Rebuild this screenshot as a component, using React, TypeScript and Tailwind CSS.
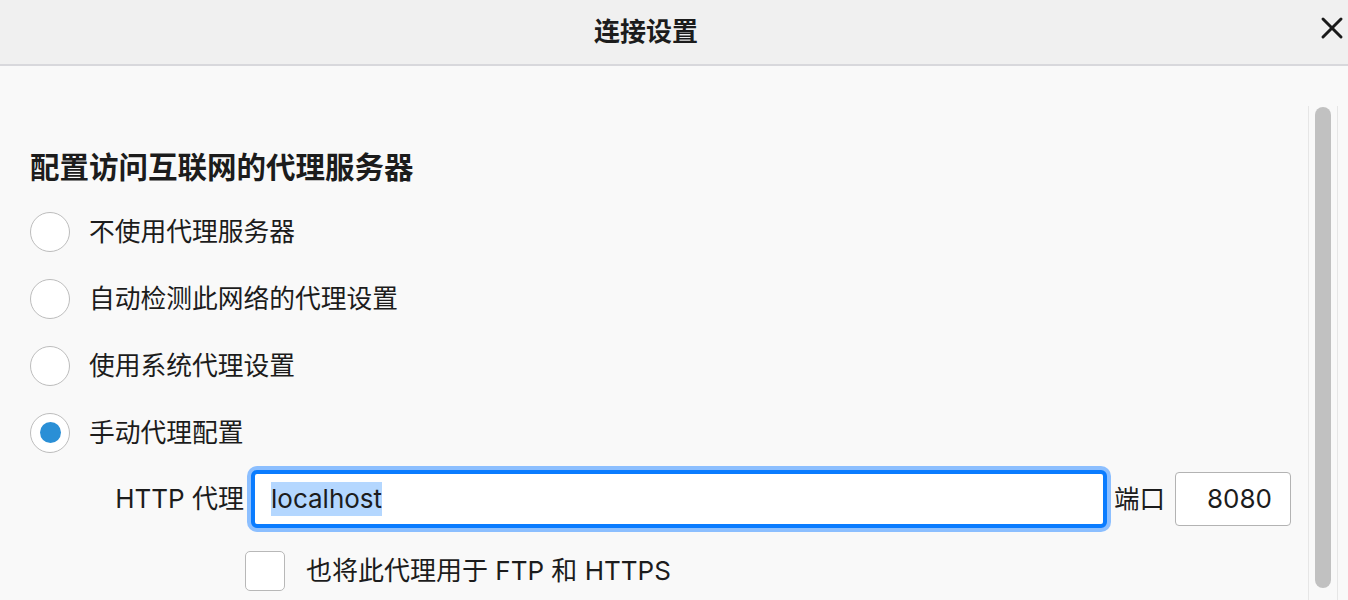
import { X } from "lucide-react";

const FONT = { fontFamily: 'Inter, "Noto Sans CJK SC", sans-serif' };

const OPTIONS = [
  { label: "不使用代理服务器", checked: false },
  { label: "自动检测此网络的代理设置", checked: false },
  { label: "使用系统代理设置", checked: false },
  { label: "手动代理配置", checked: true },
];

function Radio({ checked }: { checked: boolean }) {
  return (
    <span className="flex h-[40px] w-[40px] shrink-0 items-center justify-center rounded-full border-[1.5px] border-[#bdbdbd] bg-white">
      {checked && <span className="h-[21px] w-[21px] rounded-full bg-[#2a8fd6]" />}
    </span>
  );
}

export default function App() {
  return (
    <div className="flex h-[600px] w-[1348px] flex-col overflow-hidden bg-[#f9f9f9] text-[#1c1c1c]" style={FONT}>
      <header className="grid h-[66px] shrink-0 grid-cols-[1fr_auto_1fr] border-b-2 border-[#d8d8dc] bg-[#f0f0f0]">
        <div />
        <h1 className="self-center pb-[1px] pr-[56px] text-[26px] font-bold leading-none">连接设置</h1>
        <button className="mr-[-2px] mt-[10px] self-start justify-self-end text-[#1a1a1a]">
          <X size={36} strokeWidth={2} />
        </button>
      </header>

      <div className="flex min-h-0 flex-1">
        <main className="flex-1 pl-[30px] pt-[82px]">
          <h2 className="flex h-[40px] items-center text-[29.5px] font-bold leading-none">
            配置访问互联网的代理服务器
          </h2>

          <div className="mt-[10px] flex flex-col">
            {OPTIONS.map((o) => (
              <label key={o.label} className="flex h-[67px] items-center gap-[19px] text-[25.75px]">
                <Radio checked={o.checked} />
                <span className="leading-none">{o.label}</span>
              </label>
            ))}
          </div>

          <div className="flex h-[66px] items-center">
            <span className="w-[214px] text-right text-[26px] leading-none">HTTP 代理</span>
            <div className="ml-[7px] flex h-[58px] w-[856px] items-center rounded-[6px] border-4 border-[#0a7cff] bg-white pl-[16px] ring-4 ring-[#8cbfff]">
              <span className="bg-[#b4d7ff] py-[3px] text-[26px] leading-[28px]">localhost</span>
            </div>
            <span className="ml-[7px] text-[25.5px] leading-none">端口</span>
            <div className="ml-[10px] flex h-[54px] w-[116px] items-center justify-end rounded-[4px] border border-[#b3b3b3] bg-white pr-[18px] text-[26px] leading-none">
              8080
            </div>
          </div>

          <label className="ml-[215px] mt-[19px] flex items-center gap-[21px] text-[26px]">
            <span className="h-[40px] w-[40px] rounded-[5px] border-[1.5px] border-[#b8b8b8] bg-white" />
            <span className="leading-none">也将此代理用于 FTP 和 HTTPS</span>
          </label>
        </main>

        <div className="mr-[10px] mt-[40px] flex w-[30px] justify-center border-x border-[#e6e6e6]">
          <div className="mt-[1px] h-[481px] w-[16px] rounded-full bg-[#c1c1c1]" />
        </div>
      </div>
    </div>
  );
}
